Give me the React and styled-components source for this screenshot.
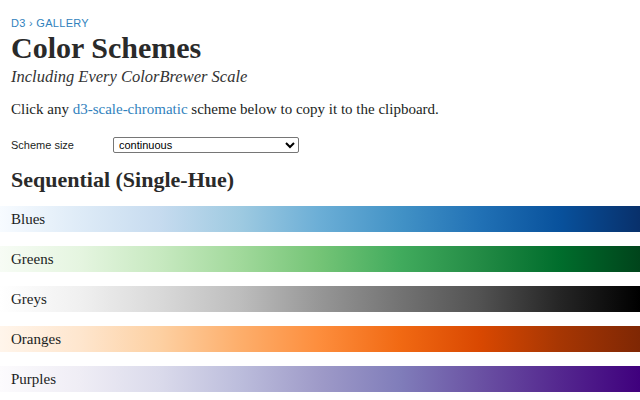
import React from "react";
import styled, { createGlobalStyle } from "styled-components";

const Global = createGlobalStyle`
  html, body { margin: 0; padding: 0; background: #fff; }
  body { font-family: "Liberation Serif", serif; color: #1b1e23; }
`;

const Page = styled.div`
  display: flex;
  flex-direction: column;
`;

const Header = styled.header`
  padding: 17px 11px 0;
  display: flex;
  flex-direction: column;
`;

const Crumbs = styled.nav`
  font-family: "Liberation Sans", Arial, sans-serif;
  font-size: 11px;
  line-height: 13px;
  letter-spacing: 0.3px;
  color: #3182bd;
  text-transform: uppercase;
`;

const Title = styled.h1`
  margin: 1px 0 0;
  font-size: 30px;
  line-height: 34px;
  font-weight: 700;
  color: #2a2a2a;
`;

const Subtitle = styled.h2`
  margin: 2px 0 0;
  font-size: 16.5px;
  line-height: 20px;
  font-style: italic;
  font-weight: 400;
  color: #333;
`;

const Para = styled.p`
  margin: 12px 0 0;
  font-size: 15px;
  line-height: 20px;
`;

const Link = styled.a`
  color: #3182bd;
  text-decoration: none;
`;

const Form = styled.form`
  margin: 18px 0 0;
  display: flex;
  align-items: center;
  font-family: "Liberation Sans", Arial, sans-serif;
  font-size: 11px;
`;

const Label = styled.label`
  width: 102px;
`;

const Select = styled.select`
  width: 186px;
  height: 16px;
  font-family: "Liberation Sans", Arial, sans-serif;
  font-size: 11px;
  padding: 0 1px;
  border: 1px solid #767676;
  border-radius: 2px;
  background: #fff;
  color: #000;
`;

const H2 = styled.h2`
  margin: 13px 0 0;
  font-size: 22px;
  line-height: 28px;
  font-weight: 700;
  color: #2a2a2a;
`;

const Ramps = styled.div`
  margin-top: 12px;
  display: flex;
  flex-direction: column;
  gap: 14px;
`;

const Ramp = styled.div`
  height: 26px;
  display: flex;
  align-items: center;
  padding-left: 11px;
  font-size: 15px;
  color: #1b1e23;
  background: linear-gradient(to right, ${(p) => p.$stops.join(", ")});
  cursor: pointer;
`;

const schemes = [
  ["Blues", ["#f7fbff", "#deebf7", "#c6dbef", "#9ecae1", "#6baed6", "#4292c6", "#2171b5", "#08519c", "#08306b"]],
  ["Greens", ["#f7fcf5", "#e5f5e0", "#c7e9c0", "#a1d99b", "#74c476", "#41ab5d", "#238b45", "#006d2c", "#00441b"]],
  ["Greys", ["#ffffff", "#f0f0f0", "#d9d9d9", "#bdbdbd", "#969696", "#737373", "#525252", "#252525", "#000000"]],
  ["Oranges", ["#fff5eb", "#fee6ce", "#fdd0a2", "#fdae6b", "#fd8d3c", "#f16913", "#d94801", "#a63603", "#7f2704"]],
  ["Purples", ["#fcfbfd", "#efedf5", "#dadaeb", "#bcbddc", "#9e9ac8", "#807dba", "#6a51a3", "#54278f", "#3f007d"]],
];

export default function App() {
  return (
    <Page>
      <Global />
      <Header>
        <Crumbs>D3 › Gallery</Crumbs>
        <Title>Color Schemes</Title>
        <Subtitle>Including Every ColorBrewer Scale</Subtitle>
        <Para>
          Click any <Link href="#">d3-scale-chromatic</Link> scheme below to copy it to the clipboard.
        </Para>
        <Form>
          <Label>Scheme size</Label>
          <Select defaultValue="continuous">
            <option value="continuous">continuous</option>
          </Select>
        </Form>
        <H2>Sequential (Single-Hue)</H2>
      </Header>
      <Ramps>
        {schemes.map(([name, stops]) => (
          <Ramp key={name} $stops={stops}>{name}</Ramp>
        ))}
      </Ramps>
    </Page>
  );
}
